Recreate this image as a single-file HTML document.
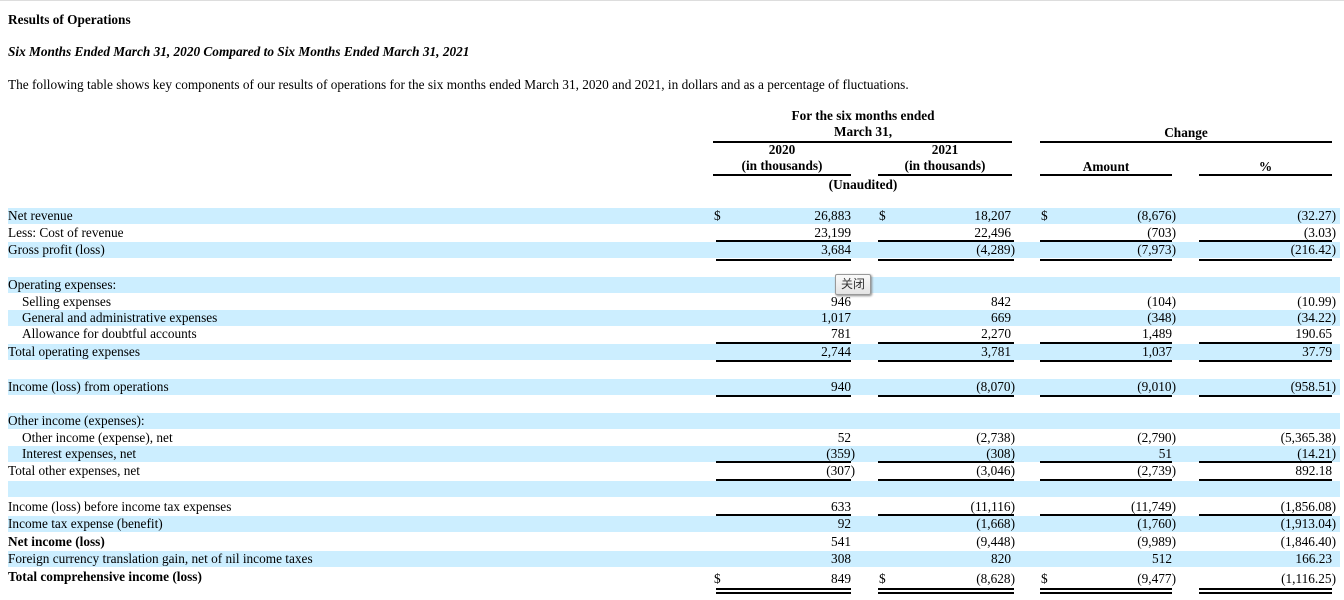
<!DOCTYPE html>
<html><head><meta charset="utf-8"><style>
body{margin:0;width:1344px;height:600px;overflow:hidden;background:#fff;font-family:"Liberation Serif","Noto Serif CJK SC",serif;font-size:13.3px;color:#000;position:relative}
.a{position:absolute;white-space:nowrap;line-height:16px}
.r{position:absolute;left:8px;width:1332px;height:16px}
.b{background:#cceeff}
.n{position:absolute;text-align:right;line-height:16px;white-space:nowrap}
.p{margin-right:-4px}
.l{position:absolute;height:2px;background:#000}
.c{position:absolute;text-align:center;font-weight:bold;line-height:16px;white-space:nowrap}
</style></head><body>
<div style="position:absolute;left:0;top:0;width:1344px;height:1px;background:#ddd"></div>
<div class="a" style="left:8px;top:12px;font-weight:bold">Results of Operations</div>
<div class="a" style="left:8px;top:44px;font-weight:bold;font-style:italic">Six Months Ended March 31, 2020 Compared to Six Months Ended March 31, 2021</div>
<div class="a" style="left:8px;top:77px">The following table shows key components of our results of operations for the six months ended March 31, 2020 and 2021, in dollars and as a percentage of fluctuations.</div>

<div class="c" style="left:713px;width:300px;top:108px">For the six months ended</div>
<div class="c" style="left:713px;width:300px;top:124px">March 31,</div>
<div class="c" style="left:1040px;width:292px;top:125px">Change</div>
<div class="l" style="left:713px;width:299px;top:141px"></div>
<div class="l" style="left:1040px;width:292px;top:141px"></div>
<div class="c" style="left:713px;width:138px;top:142px">2020</div>
<div class="c" style="left:713px;width:138px;top:158px">(in thousands)</div>
<div class="c" style="left:878px;width:134px;top:142px">2021</div>
<div class="c" style="left:878px;width:134px;top:158px">(in thousands)</div>
<div class="c" style="left:1040px;width:132px;top:159px">Amount</div>
<div class="c" style="left:1199px;width:133px;top:159px">%</div>
<div class="l" style="left:713px;width:138px;top:174px"></div>
<div class="l" style="left:878px;width:134px;top:174px"></div>
<div class="l" style="left:1040px;width:132px;top:174px"></div>
<div class="l" style="left:1199px;width:133px;top:174px"></div>
<div class="c" style="left:713px;width:300px;top:177px">(Unaudited)</div>

<div class="r b" style="top:208px"></div>
<div class="r b" style="top:242px"></div>
<div class="r b" style="top:277px"></div>
<div class="r b" style="top:310px"></div>
<div class="r b" style="top:344px"></div>
<div class="r b" style="top:379px"></div>
<div class="r b" style="top:413px"></div>
<div class="r b" style="top:446px"></div>
<div class="r b" style="top:481px"></div>
<div class="r b" style="top:516px"></div>
<div class="r b" style="top:551px"></div>

<div class="a" style="left:8px;top:208px">Net revenue</div>
<div class="a" style="left:8px;top:225px">Less: Cost of revenue</div>
<div class="a" style="left:8px;top:242px">Gross profit (loss)</div>
<div class="a" style="left:8px;top:277px">Operating expenses:</div>
<div class="a" style="left:22px;top:294px">Selling expenses</div>
<div class="a" style="left:22px;top:310px">General and administrative expenses</div>
<div class="a" style="left:22px;top:326px">Allowance for doubtful accounts</div>
<div class="a" style="left:8px;top:344px">Total operating expenses</div>
<div class="a" style="left:8px;top:379px">Income (loss) from operations</div>
<div class="a" style="left:8px;top:413px">Other income (expenses):</div>
<div class="a" style="left:22px;top:430px">Other income (expense), net</div>
<div class="a" style="left:22px;top:446px">Interest expenses, net</div>
<div class="a" style="left:8px;top:463px">Total other expenses, net</div>
<div class="a" style="left:8px;top:499px">Income (loss) before income tax expenses</div>
<div class="a" style="left:8px;top:516px">Income tax expense (benefit)</div>
<div class="a" style="left:8px;top:534px;font-weight:bold">Net income (loss)</div>
<div class="a" style="left:8px;top:551px">Foreign currency translation gain, net of nil income taxes</div>
<div class="a" style="left:8px;top:569px;font-weight:bold">Total comprehensive income (loss)</div>

<div class="a" style="left:714px;top:208px">$</div>
<div class="a" style="left:879px;top:208px">$</div>
<div class="a" style="left:1041px;top:208px">$</div>
<div class="a" style="left:714px;top:571px">$</div>
<div class="a" style="left:879px;top:571px">$</div>
<div class="a" style="left:1041px;top:571px">$</div>

<div class="n" style="left:740px;width:111px;top:208px">26,883</div>
<div class="n" style="left:900px;width:111px;top:208px">18,207</div>
<div class="n" style="left:1060px;width:112px;top:208px">(8,676<span class="p">)</span></div>
<div class="n" style="left:1220px;width:112px;top:208px">(32.27<span class="p">)</span></div>

<div class="n" style="left:740px;width:111px;top:225px">23,199</div>
<div class="n" style="left:900px;width:111px;top:225px">22,496</div>
<div class="n" style="left:1060px;width:112px;top:225px">(703<span class="p">)</span></div>
<div class="n" style="left:1220px;width:112px;top:225px">(3.03<span class="p">)</span></div>

<div class="n" style="left:740px;width:111px;top:242px">3,684</div>
<div class="n" style="left:900px;width:111px;top:242px">(4,289<span class="p">)</span></div>
<div class="n" style="left:1060px;width:112px;top:242px">(7,973<span class="p">)</span></div>
<div class="n" style="left:1220px;width:112px;top:242px">(216.42<span class="p">)</span></div>

<div class="n" style="left:740px;width:111px;top:294px">946</div>
<div class="n" style="left:900px;width:111px;top:294px">842</div>
<div class="n" style="left:1060px;width:112px;top:294px">(104<span class="p">)</span></div>
<div class="n" style="left:1220px;width:112px;top:294px">(10.99<span class="p">)</span></div>

<div class="n" style="left:740px;width:111px;top:310px">1,017</div>
<div class="n" style="left:900px;width:111px;top:310px">669</div>
<div class="n" style="left:1060px;width:112px;top:310px">(348<span class="p">)</span></div>
<div class="n" style="left:1220px;width:112px;top:310px">(34.22<span class="p">)</span></div>

<div class="n" style="left:740px;width:111px;top:326px">781</div>
<div class="n" style="left:900px;width:111px;top:326px">2,270</div>
<div class="n" style="left:1060px;width:112px;top:326px">1,489</div>
<div class="n" style="left:1220px;width:112px;top:326px">190.65</div>

<div class="n" style="left:740px;width:111px;top:344px">2,744</div>
<div class="n" style="left:900px;width:111px;top:344px">3,781</div>
<div class="n" style="left:1060px;width:112px;top:344px">1,037</div>
<div class="n" style="left:1220px;width:112px;top:344px">37.79</div>

<div class="n" style="left:740px;width:111px;top:379px">940</div>
<div class="n" style="left:900px;width:111px;top:379px">(8,070<span class="p">)</span></div>
<div class="n" style="left:1060px;width:112px;top:379px">(9,010<span class="p">)</span></div>
<div class="n" style="left:1220px;width:112px;top:379px">(958.51<span class="p">)</span></div>

<div class="n" style="left:740px;width:111px;top:430px">52</div>
<div class="n" style="left:900px;width:111px;top:430px">(2,738<span class="p">)</span></div>
<div class="n" style="left:1060px;width:112px;top:430px">(2,790<span class="p">)</span></div>
<div class="n" style="left:1220px;width:112px;top:430px">(5,365.38<span class="p">)</span></div>

<div class="n" style="left:740px;width:111px;top:446px">(359<span class="p">)</span></div>
<div class="n" style="left:900px;width:111px;top:446px">(308<span class="p">)</span></div>
<div class="n" style="left:1060px;width:112px;top:446px">51</div>
<div class="n" style="left:1220px;width:112px;top:446px">(14.21<span class="p">)</span></div>

<div class="n" style="left:740px;width:111px;top:463px">(307<span class="p">)</span></div>
<div class="n" style="left:900px;width:111px;top:463px">(3,046<span class="p">)</span></div>
<div class="n" style="left:1060px;width:112px;top:463px">(2,739<span class="p">)</span></div>
<div class="n" style="left:1220px;width:112px;top:463px">892.18</div>

<div class="n" style="left:740px;width:111px;top:499px">633</div>
<div class="n" style="left:900px;width:111px;top:499px">(11,116<span class="p">)</span></div>
<div class="n" style="left:1060px;width:112px;top:499px">(11,749<span class="p">)</span></div>
<div class="n" style="left:1220px;width:112px;top:499px">(1,856.08<span class="p">)</span></div>

<div class="n" style="left:740px;width:111px;top:516px">92</div>
<div class="n" style="left:900px;width:111px;top:516px">(1,668<span class="p">)</span></div>
<div class="n" style="left:1060px;width:112px;top:516px">(1,760<span class="p">)</span></div>
<div class="n" style="left:1220px;width:112px;top:516px">(1,913.04<span class="p">)</span></div>

<div class="n" style="left:740px;width:111px;top:534px">541</div>
<div class="n" style="left:900px;width:111px;top:534px">(9,448<span class="p">)</span></div>
<div class="n" style="left:1060px;width:112px;top:534px">(9,989<span class="p">)</span></div>
<div class="n" style="left:1220px;width:112px;top:534px">(1,846.40<span class="p">)</span></div>

<div class="n" style="left:740px;width:111px;top:551px">308</div>
<div class="n" style="left:900px;width:111px;top:551px">820</div>
<div class="n" style="left:1060px;width:112px;top:551px">512</div>
<div class="n" style="left:1220px;width:112px;top:551px">166.23</div>

<div class="n" style="left:740px;width:111px;top:571px">849</div>
<div class="n" style="left:900px;width:111px;top:571px">(8,628<span class="p">)</span></div>
<div class="n" style="left:1060px;width:112px;top:571px">(9,477<span class="p">)</span></div>
<div class="n" style="left:1220px;width:112px;top:571px">(1,116.25<span class="p">)</span></div>

<div style="position:absolute;left:0;top:0">
<div class="l" style="left:716px;width:135px;top:240px"></div><div class="l" style="left:878px;width:136px;top:240px"></div><div class="l" style="left:1040px;width:132px;top:240px"></div><div class="l" style="left:1199px;width:133px;top:240px"></div>
<div class="l" style="left:716px;width:135px;top:259px"></div><div class="l" style="left:878px;width:136px;top:259px"></div><div class="l" style="left:1040px;width:132px;top:259px"></div><div class="l" style="left:1199px;width:133px;top:259px"></div>
<div class="l" style="left:716px;width:135px;top:342px"></div><div class="l" style="left:878px;width:136px;top:342px"></div><div class="l" style="left:1040px;width:132px;top:342px"></div><div class="l" style="left:1199px;width:133px;top:342px"></div>
<div class="l" style="left:716px;width:135px;top:360px"></div><div class="l" style="left:878px;width:136px;top:360px"></div><div class="l" style="left:1040px;width:132px;top:360px"></div><div class="l" style="left:1199px;width:133px;top:360px"></div>
<div class="l" style="left:716px;width:135px;top:395px"></div><div class="l" style="left:878px;width:136px;top:395px"></div><div class="l" style="left:1040px;width:132px;top:395px"></div><div class="l" style="left:1199px;width:133px;top:395px"></div>
<div class="l" style="left:716px;width:135px;top:461px"></div><div class="l" style="left:878px;width:136px;top:461px"></div><div class="l" style="left:1040px;width:132px;top:461px"></div><div class="l" style="left:1199px;width:133px;top:461px"></div>
<div class="l" style="left:716px;width:135px;top:479px"></div><div class="l" style="left:878px;width:136px;top:479px"></div><div class="l" style="left:1040px;width:132px;top:479px"></div><div class="l" style="left:1199px;width:133px;top:479px"></div>
<div class="l" style="left:716px;width:135px;top:514px"></div><div class="l" style="left:878px;width:136px;top:514px"></div><div class="l" style="left:1040px;width:132px;top:514px"></div><div class="l" style="left:1199px;width:133px;top:514px"></div>
<div class="l" style="left:716px;width:135px;top:588px"></div><div class="l" style="left:878px;width:136px;top:588px"></div><div class="l" style="left:1040px;width:132px;top:588px"></div><div class="l" style="left:1199px;width:133px;top:588px"></div>
<div class="l" style="left:716px;width:135px;top:592px"></div><div class="l" style="left:878px;width:136px;top:592px"></div><div class="l" style="left:1040px;width:132px;top:592px"></div><div class="l" style="left:1199px;width:133px;top:592px"></div>
</div>

<div style="position:absolute;left:835px;top:274px;width:34px;height:19px;border:1px solid #999;border-radius:2px;background:linear-gradient(#fafafa,#e4e4e4);box-shadow:1px 1px 2px #888;font-family:'Noto Sans CJK SC',sans-serif;font-size:12px;line-height:18px;text-align:center;color:#333">关闭</div>
</body></html>
